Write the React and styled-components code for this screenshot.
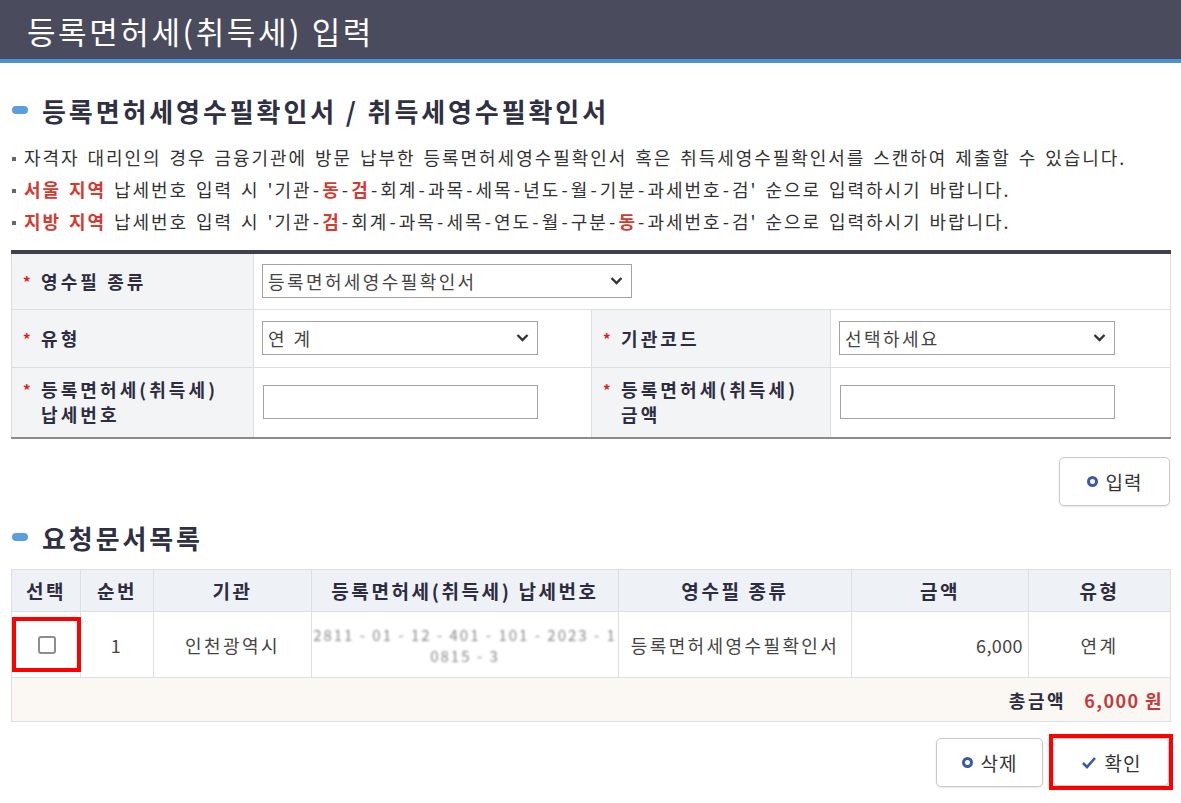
import React from "react";
import styled, { createGlobalStyle } from "styled-components";

const FONT = `"Noto Sans CJK KR", "Noto Sans", sans-serif`;

const GlobalStyle = createGlobalStyle`
  html, body { margin: 0; padding: 0; background: #fff; }
  body { font-family: ${FONT}; color: #333; }
  * { box-sizing: border-box; }
`;

const Page = styled.div`
  width: 1181px;
  min-height: 803px;
  background: #fff;
`;

const Header = styled.header`
  height: 63px;
  background: #4a4b5d;
  border-bottom: 4px solid #4b90d6;
  display: flex;
  align-items: center;
  padding: 2px 0 0 27px;
`;

const HeaderTitle = styled.h1`
  margin: 0;
  color: #fff;
  font-size: 31px;
  font-weight: 400;
  letter-spacing: 2.6px;
`;

const Content = styled.main`
  padding: 0 11px 16px 11px;
`;

const SectionTitle = styled.h2`
  display: flex;
  align-items: center;
  gap: 14px;
  height: 40px;
  margin: ${(p) => p.$mt}px 0 0 1px;
  font-size: 26px;
  font-weight: 700;
  color: #2f3042;
  letter-spacing: 2.9px;
  &::before {
    content: "";
    width: 16px;
    height: 8px;
    border-radius: 4px;
    background: #5c9fe0;
  }
`;

const NoticeList = styled.ul`
  list-style: none;
  margin: 11px 0 0;
  padding: 0;
`;

const Notice = styled.li`
  font-size: 18px;
  line-height: 32px;
  color: #333;
  letter-spacing: 1.95px;
  word-spacing: 2px;
  &::before {
    content: "";
    display: inline-block;
    vertical-align: middle;
    width: 4px;
    height: 4px;
    margin: -3px 8px 0 1px;
    background: #666;
  }
`;

const Em = styled.span`
  color: #d53a30;
  font-weight: 700;
`;

const Dash = styled.span`
  margin: 0 1.2px;
`;

const FormTable = styled.table`
  width: 100%;
  margin-top: 13px;
  border-collapse: collapse;
  table-layout: fixed;
  border-top: 4px solid #3e3f50;
  border-bottom: 2px solid #8b8b8b;
`;

const LabelCell = styled.th`
  background: #f3f4f6;
  border: 1px solid #dcdee2;
  padding: 0 10px 0 11px;
  text-align: left;
  font-size: 18px;
  font-weight: 700;
  color: #2d2d3f;
  letter-spacing: 3.1px;
  height: ${(p) => p.$h}px;
`;

const LabelInner = styled.div`
  display: flex;
  align-items: flex-start;
  line-height: 25px;
`;

const Star = styled.span`
  width: 18px;
  flex: none;
  color: #e02020;
  font-size: 15px;
`;

const FieldCell = styled.td`
  border: 1px solid #dcdee2;
  padding: 0 8px;
  height: ${(p) => p.$h}px;
`;

const SelectWrap = styled.div`
  position: relative;
  width: ${(p) => p.$w}px;
  height: 34px;
`;

const Select = styled.select`
  appearance: none;
  width: 100%;
  height: 100%;
  border: 1px solid #a3a3a3;
  background: #fff;
  padding: 0 30px 0 5px;
  font: 18px ${FONT};
  color: #444;
  letter-spacing: 2.4px;
`;

const Chevron = styled.svg`
  position: absolute;
  right: 9px;
  top: 50%;
  transform: translateY(-50%);
  pointer-events: none;
`;

const TextInput = styled.input`
  display: block;
  width: 275px;
  height: 34px;
  margin-left: ${(p) => p.$ml || 0}px;
  border: 1px solid #a3a3a3;
  background: #fff;
  font: 18px ${FONT};
`;

const ButtonRow = styled.div`
  display: flex;
  justify-content: flex-end;
  align-items: center;
  gap: ${(p) => p.$gap || 6}px;
  margin-top: ${(p) => p.$mt}px;
`;

const Button = styled.button`
  display: inline-flex;
  align-items: center;
  justify-content: center;
  gap: 8px;
  width: ${(p) => p.$w}px;
  height: ${(p) => p.$h || 49}px;
  background: #fff;
  border: 1px solid #c9c9c9;
  border-radius: 5px;
  box-shadow: 0 1px 2px rgba(0, 0, 0, 0.1);
  font: 19px ${FONT};
  color: #333;
  letter-spacing: 1px;
  padding: 0;
  cursor: pointer;
`;

const Ring = styled.span`
  width: 11px;
  height: 11px;
  border: 3px solid #3a5aa6;
  border-radius: 50%;
`;

const Highlight = styled.span`
  display: inline-flex;
  align-items: center;
  justify-content: center;
  border: 4px solid #ff0000;
  width: ${(p) => p.$w}px;
  height: ${(p) => p.$h}px;
  margin-right: ${(p) => p.$mr || 0}px;
`;

const ListTable = styled.table`
  width: 100%;
  margin-top: 12px;
  border-collapse: collapse;
  table-layout: fixed;
  border: 1px solid #dcdfe4;
`;

const HeadCell = styled.th`
  height: 42px;
  background: #eef1f6;
  border: 1px solid #dcdfe4;
  font-size: 19px;
  font-weight: 700;
  color: #2d2d3f;
  letter-spacing: 2.6px;
  text-align: center;
`;

const Cell = styled.td`
  height: 66px;
  border: 1px solid #dcdfe4;
  font-size: 18px;
  color: #444;
  letter-spacing: ${(p) => (p.$align === "right" ? "0.4px" : "2.4px")};
  text-align: ${(p) => p.$align || "center"};
  padding: ${(p) => (p.$align === "right" ? "0 5px 0 0" : "0")};
`;

const Masked = styled.div`
  color: #8a8a8a;
  font-size: 15px;
  line-height: 21px;
  filter: blur(1.3px);
  letter-spacing: 2px;
  white-space: nowrap;
`;

const Checkbox = styled.span`
  width: 18px;
  height: 18px;
  border: 2px solid #8e8e8e;
  border-radius: 3px;
  background: #fff;
`;

const TotalCell = styled.td`
  height: 44px;
  background: #fbf7f2;
  border: 1px solid #dcdfe4;
  text-align: right;
  padding-right: 7px;
  font-size: 18px;
  font-weight: 700;
`;

const TotalLabel = styled.span`
  color: #2d2d3f;
  letter-spacing: 2.6px;
  margin-right: 18px;
`;

const TotalValue = styled.span`
  color: #c8373a;
  letter-spacing: 1.4px;
`;

const CheckIcon = () => (
  <svg width="16" height="13" viewBox="0 0 16 13">
    <path d="M2 7 L6 11 L14 2" fill="none" stroke="#3a5aa6" strokeWidth="2.6" />
  </svg>
);

const ChevronIcon = () => (
  <Chevron width="13" height="9" viewBox="0 0 13 9">
    <path d="M1.5 1.5 L6.5 6.5 L11.5 1.5" fill="none" stroke="#333" strokeWidth="2.4" />
  </Chevron>
);

const SelectBox = ({ w, value }) => (
  <SelectWrap $w={w}>
    <Select defaultValue={value}>
      <option>{value}</option>
    </Select>
    <ChevronIcon />
  </SelectWrap>
);

const Label = ({ h, children }) => (
  <LabelCell $h={h}>
    <LabelInner>
      <Star>*</Star>
      <span>{children}</span>
    </LabelInner>
  </LabelCell>
);

const D = () => <Dash>-</Dash>;

export default function App() {
  return (
    <Page>
      <GlobalStyle />
      <Header>
        <HeaderTitle>등록면허세(취득세) 입력</HeaderTitle>
      </Header>
      <Content>
        <SectionTitle $mt={27}>등록면허세영수필확인서 / 취득세영수필확인서</SectionTitle>
        <NoticeList>
          <Notice>
            자격자 대리인의 경우 금융기관에 방문 납부한 등록면허세영수필확인서 혹은 취득세영수필확인서를 스캔하여 제출할 수 있습니다.
          </Notice>
          <Notice>
            <Em>서울 지역</Em> 납세번호 입력 시 '기관<D /><Em>동</Em><D /><Em>검</Em><D />회계<D />과목<D />세목<D />년도<D />월<D />기분<D />과세번호<D />검' 순으로 입력하시기 바랍니다.
          </Notice>
          <Notice>
            <Em>지방 지역</Em> 납세번호 입력 시 '기관<D /><Em>검</Em><D />회계<D />과목<D />세목<D />연도<D />월<D />구분<D /><Em>동</Em><D />과세번호<D />검' 순으로 입력하시기 바랍니다.
          </Notice>
        </NoticeList>

        <FormTable>
          <colgroup>
            <col style={{ width: 242 }} />
            <col style={{ width: 338 }} />
            <col style={{ width: 239 }} />
            <col style={{ width: 340 }} />
          </colgroup>
          <tbody>
            <tr>
              <Label h={57}>영수필 종류</Label>
              <FieldCell $h={57} colSpan={3}>
                <SelectBox w={370} value="등록면허세영수필확인서" />
              </FieldCell>
            </tr>
            <tr>
              <Label h={58}>유형</Label>
              <FieldCell $h={58}>
                <SelectBox w={276} value="연 계" />
              </FieldCell>
              <Label h={58}>기관코드</Label>
              <FieldCell $h={58}>
                <SelectBox w={276} value="선택하세요" />
              </FieldCell>
            </tr>
            <tr>
              <Label h={71}>
                등록면허세(취득세)
                <br />
                납세번호
              </Label>
              <FieldCell $h={71}>
                <TextInput $ml={1} />
              </FieldCell>
              <Label h={71}>
                등록면허세(취득세)
                <br />
                금액
              </Label>
              <FieldCell $h={71}>
                <TextInput $ml={1} />
              </FieldCell>
            </tr>
          </tbody>
        </FormTable>

        <ButtonRow $mt={18}>
          <Button $w={111}>
            <Ring />
            입력
          </Button>
        </ButtonRow>

        <SectionTitle $mt={11}>요청문서목록</SectionTitle>

        <ListTable>
          <colgroup>
            <col style={{ width: 69 }} />
            <col style={{ width: 73 }} />
            <col style={{ width: 158 }} />
            <col style={{ width: 307 }} />
            <col style={{ width: 233 }} />
            <col style={{ width: 177 }} />
            <col style={{ width: 142 }} />
          </colgroup>
          <thead>
            <tr>
              <HeadCell>선택</HeadCell>
              <HeadCell>순번</HeadCell>
              <HeadCell>기관</HeadCell>
              <HeadCell>등록면허세(취득세) 납세번호</HeadCell>
              <HeadCell>영수필 종류</HeadCell>
              <HeadCell>금액</HeadCell>
              <HeadCell>유형</HeadCell>
            </tr>
          </thead>
          <tbody>
            <tr>
              <Cell>
                <Highlight $w={69} $h={55}>
                  <Checkbox />
                </Highlight>
              </Cell>
              <Cell>1</Cell>
              <Cell>인천광역시</Cell>
              <Cell>
                <Masked>
                  2811 - 01 - 12 - 401 - 101 - 2023 - 1
                  <br />
                  0815 - 3
                </Masked>
              </Cell>
              <Cell>등록면허세영수필확인서</Cell>
              <Cell $align="right">6,000</Cell>
              <Cell>연계</Cell>
            </tr>
            <tr>
              <TotalCell colSpan={7}>
                <TotalLabel>총금액</TotalLabel>
                <TotalValue>6,000 원</TotalValue>
              </TotalCell>
            </tr>
          </tbody>
        </ListTable>

        <ButtonRow $mt={12}>
          <Button $w={107}>
            <Ring />
            삭제
          </Button>
          <Highlight $w={124} $h={56} $mr={-3}>
            <Button $w={116} $h={48}>
              <CheckIcon />
              확인
            </Button>
          </Highlight>
        </ButtonRow>
      </Content>
    </Page>
  );
}
